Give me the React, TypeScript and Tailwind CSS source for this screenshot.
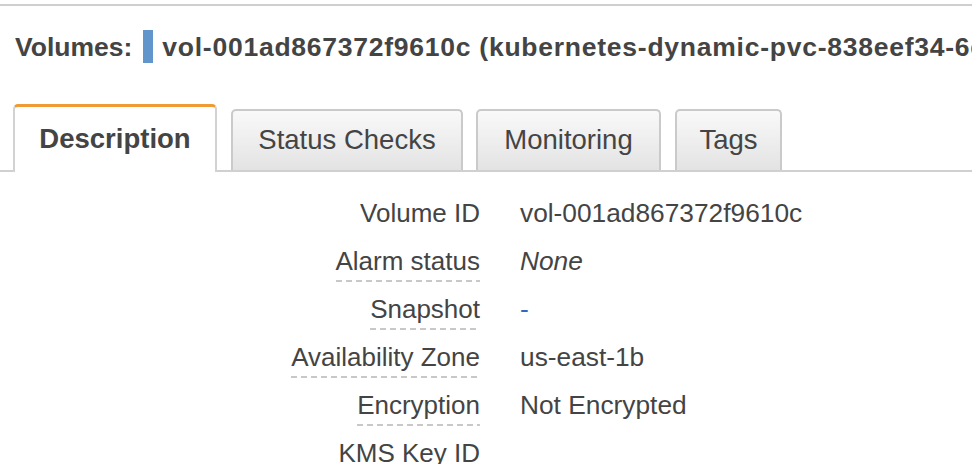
const font = "font-['Liberation_Sans','Helvetica_Neue',Arial,sans-serif]";

const tabs = [
  { label: "Description", width: "w-[204px]", ml: "ml-0", active: true },
  { label: "Status Checks", width: "w-[232px]", ml: "ml-[14px]", active: false },
  { label: "Monitoring", width: "w-[185px]", ml: "ml-[13px]", active: false },
  { label: "Tags", width: "w-[107px]", ml: "ml-[14px]", active: false },
];

type Row = {
  label: string;
  value: React.ReactNode;
  dashed: boolean;
};

const rows: Row[] = [
  { label: "Volume ID", value: "vol-001ad867372f9610c", dashed: false },
  { label: "Alarm status", value: <span className="italic">None</span>, dashed: true },
  {
    label: "Snapshot",
    value: <span className="text-[#2f6ac0]">-</span>,
    dashed: true,
  },
  { label: "Availability Zone", value: "us-east-1b", dashed: true },
  { label: "Encryption", value: "Not Encrypted", dashed: true },
  { label: "KMS Key ID", value: "", dashed: false },
];

function Tab(props: { label: string; width: string; ml: string; active: boolean }) {
  const { label, width, ml, active } = props;
  if (active) {
    return (
      <div
        className={`${width} ${ml} h-[68px] -mb-[2px] flex items-center justify-center pb-[1px] bg-white border-t-[3px] border-x-2 border-t-[#f09a34] border-x-[#d2d2d2] rounded-t-[5px] text-[27.5px] font-bold text-[#444]`}
      >
        {label}
      </div>
    );
  }
  return (
    <div
      className={`${width} ${ml} h-[61px] flex items-center justify-center pb-[2px] bg-gradient-to-b from-[#f9f9f9] to-[#e3e3e3] border-t-2 border-x-2 border-[#cacaca] rounded-t-[5px] text-[27.5px] text-[#444]`}
    >
      {label}
    </div>
  );
}

export default function App() {
  return (
    <div className={`${font} w-[972px] h-[464px] overflow-hidden bg-white text-[#444]`}>
      <div className="pt-1">
        <div className="h-[2px] bg-[#cfcfcf]" />
      </div>

      <div className="mt-[22px] flex items-center pl-[15px] whitespace-nowrap">
        <span className="text-[26.5px] font-bold leading-[33px] pt-[3px]">Volumes:</span>
        <span className="ml-[11px] w-[10px] h-[33px] bg-[#6195cc] shrink-0" />
        <span className="ml-[9px] text-[26.5px] font-bold leading-[33px] pt-[3px] tracking-[0.75px]">
          vol-001ad867372f9610c (kubernetes-dynamic-pvc-838eef34-6e1c-11e9-a2a2-0e8c5a1c2c7a)
        </span>
      </div>

      <div className="mt-[40px] flex items-end px-[13px] border-b-2 border-[#d0d0d0]">
        {tabs.map((t) => (
          <Tab key={t.label} {...t} />
        ))}
      </div>

      <div className="mt-[26px] grid grid-cols-[480px_1fr] gap-x-[40px]">
        {rows.map((r) => (
          <div key={r.label} className="contents">
            <div className="h-[48px] flex justify-end items-start">
              <span
                className={`inline-block text-[26px] leading-[30px] pb-[6px] whitespace-nowrap ${
                  r.dashed
                    ? "bg-[repeating-linear-gradient(to_right,#c8c8c8_0_6px,transparent_6px_10px)] bg-no-repeat bg-bottom bg-[length:100%_2px]"
                    : ""
                }`}
              >
                {r.label}
              </span>
            </div>
            <div className="h-[48px] text-[26.3px] leading-[30px] whitespace-nowrap">
              {r.value}
            </div>
          </div>
        ))}
      </div>
    </div>
  );
}
